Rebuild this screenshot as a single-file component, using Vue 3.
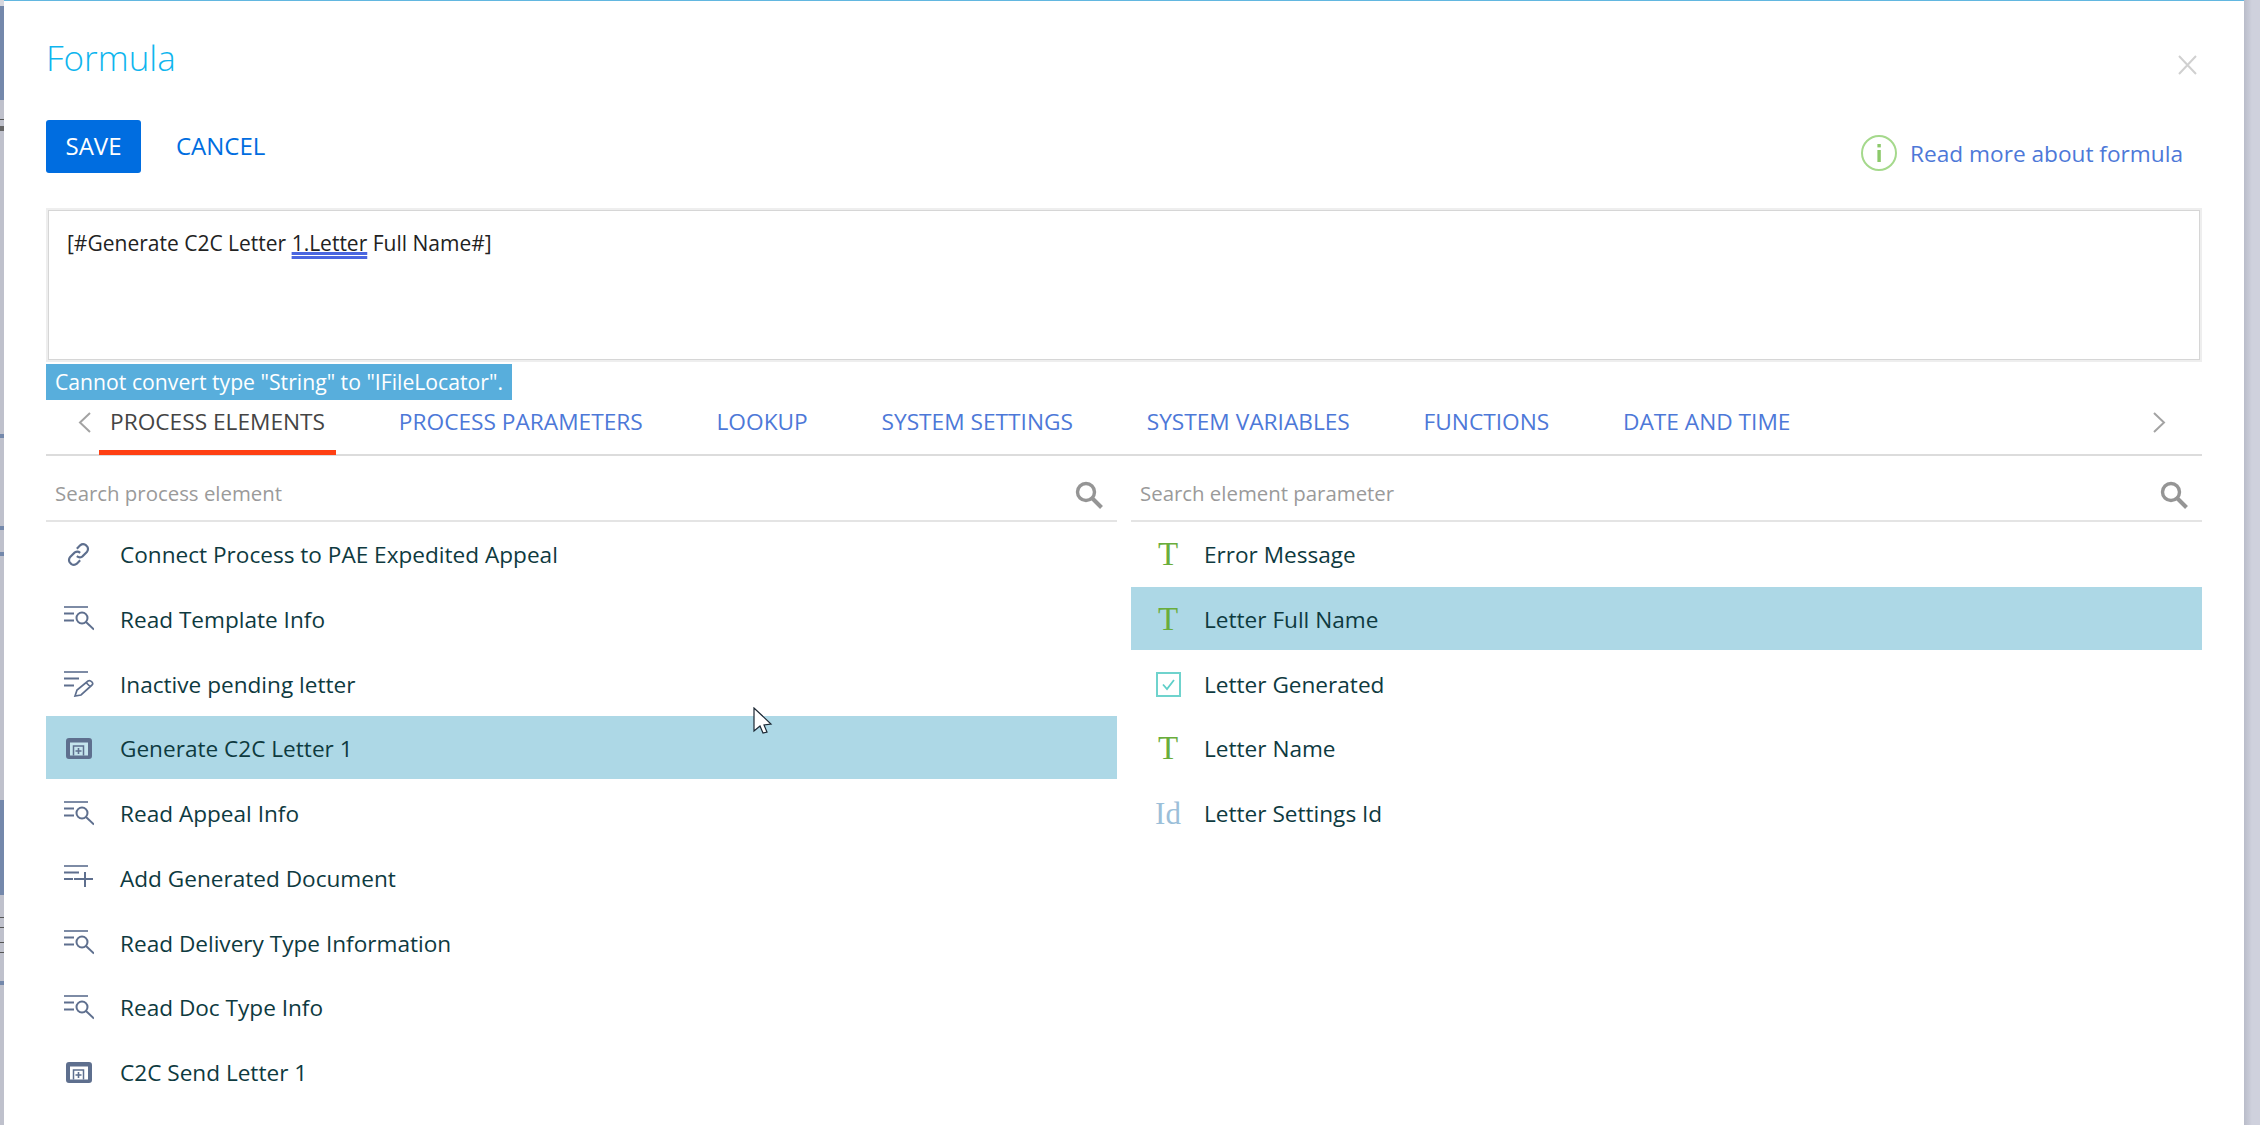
<script setup>
const tabs = ["PROCESS PARAMETERS", "LOOKUP", "SYSTEM SETTINGS", "SYSTEM VARIABLES", "FUNCTIONS", "DATE AND TIME"];

const elements = [
  { name: "Connect Process to PAE Expedited Appeal", icon: "link" },
  { name: "Read Template Info", icon: "read" },
  { name: "Inactive pending letter", icon: "edit" },
  { name: "Generate C2C Letter 1", icon: "sub", selected: true },
  { name: "Read Appeal Info", icon: "read" },
  { name: "Add Generated Document", icon: "add" },
  { name: "Read Delivery Type Information", icon: "read" },
  { name: "Read Doc Type Info", icon: "read" },
  { name: "C2C Send Letter 1", icon: "sub" },
];

const params = [
  { name: "Error Message", type: "text" },
  { name: "Letter Full Name", type: "text", selected: true },
  { name: "Letter Generated", type: "bool" },
  { name: "Letter Name", type: "text" },
  { name: "Letter Settings Id", type: "id" },
];
</script>

<template>
  <div class="page">
    <div class="strip-left"></div>
    <div class="dialog">
      <div class="title-row">
        <h1 class="title">Formula</h1>
        <svg class="close" width="19" height="20" viewBox="0 0 19 20">
          <path d="M1 1 L18 19 M18 1 L1 19" stroke="#d0d0d0" stroke-width="2" fill="none" />
        </svg>
      </div>

      <div class="actions">
        <button class="save">SAVE</button>
        <button class="cancel">CANCEL</button>
        <a class="help">
          <svg width="36" height="36" viewBox="0 0 36 36">
            <circle cx="18" cy="18" r="17" stroke="#a5d98c" stroke-width="2" fill="none" />
            <rect x="16.4" y="9" width="3.4" height="3.4" fill="#8cc96a" />
            <rect x="16.4" y="15" width="3.4" height="12" fill="#8cc96a" />
          </svg>
          <span>Read more about formula</span>
        </a>
      </div>

      <div class="editor">
        <div class="editor-inner">[#Generate C2C Letter <span class="squiggle">1.Letter</span> Full Name#]</div>
      </div>
      <div class="error-row"><span class="error">Cannot convert type "String" to "IFileLocator".</span></div>

      <div class="tabs">
        <svg class="arrow-left" width="13" height="21" viewBox="0 0 13 21">
          <path d="M12 1 L2 10.5 L12 20" stroke="#a3a3a3" stroke-width="2" fill="none" />
        </svg>
        <div class="tab active">PROCESS ELEMENTS</div>
        <div v-for="t in tabs" :key="t" class="tab">{{ t }}</div>
        <svg class="arrow-right" width="13" height="21" viewBox="0 0 13 21">
          <path d="M1 1 L11 10.5 L1 20" stroke="#a3a3a3" stroke-width="2" fill="none" />
        </svg>
      </div>

      <div class="columns">
        <div class="column">
          <div class="search">
            <span>Search process element</span>
            <svg width="28" height="28" viewBox="0 0 28 28">
              <circle cx="11" cy="11" r="8.5" stroke="#959595" stroke-width="3.4" fill="none" />
              <path d="M17 17 L26.5 26.5" stroke="#959595" stroke-width="4" />
            </svg>
          </div>
          <div v-for="el in elements" :key="el.name" class="row" :class="{ selected: el.selected }">
            <div class="row-icon">
              <svg v-if="el.icon === 'link'" class="link-icon" width="25" height="25" viewBox="0 0 30 30" fill="none" stroke="#5e6f8e" stroke-width="2.6">
                <path d="M13 8 L17 4 Q20 1.5 23.5 3.5 L25.5 5.5 Q27.5 9 25 12 L19.5 17.5 Q16 19.5 13 17" />
                <path d="M17 13 Q14 10.5 10.5 12.5 L5 18 Q2.5 21 4.5 24.5 L6.5 26.5 Q10 28.5 13 26 L17 22" />
              </svg>
              <svg v-else-if="el.icon === 'sub'" class="sub-icon" width="26" height="21" viewBox="0 0 26 21">
                <rect x="3" y="4" width="20" height="14" fill="#fff" opacity=".3" />
                <path fill="#5e6f8e" fill-rule="evenodd" d="M3 0 H23 Q26 0 26 3 V18 Q26 21 23 21 H3 Q0 21 0 18 V3 Q0 0 3 0 Z M4 4.5 V17.5 H22 V4.5 Z" />
                <path d="M7.5 17.5 V8 H17.5 V17.5" fill="none" stroke="#5e6f8e" stroke-width="1.5" />
                <path d="M12.5 10 V16 M9.5 13 H15.5" stroke="#5e6f8e" stroke-width="1.6" />
              </svg>
              <svg v-else width="30" height="26" viewBox="0 0 30 26" fill="none" stroke="#5e6f8e" stroke-width="2">
                <path d="M0 1 H24" stroke="#7d8ba5" />
                <template v-if="el.icon === 'read'">
                  <path d="M0 7.5 H10 M0 14.5 H10" />
                  <circle cx="18" cy="12" r="5.5" />
                  <path d="M22 16 L30 23.5" />
                </template>
                <template v-else-if="el.icon === 'add'">
                  <path d="M0 7.5 H15 M0 14 H9" />
                  <path d="M10 14 H29 M21 7 V22" />
                </template>
                <template v-else>
                  <path d="M0 7.5 H15 M0 14.5 H10" />
                  <path d="M11 25 L13 19 L24 10 Q26 9 28 11 Q29.5 13 28 14 L17 24 Z M22 11.5 L26 15.5" stroke-width="1.7" />
                </template>
              </svg>
            </div>
            <span class="row-name">{{ el.name }}</span>
          </div>
        </div>

        <div class="column">
          <div class="search">
            <span>Search element parameter</span>
            <svg width="28" height="28" viewBox="0 0 28 28">
              <circle cx="11" cy="11" r="8.5" stroke="#959595" stroke-width="3.4" fill="none" />
              <path d="M17 17 L26.5 26.5" stroke="#959595" stroke-width="4" />
            </svg>
          </div>
          <div v-for="p in params" :key="p.name" class="row" :class="{ selected: p.selected }">
            <div class="type-icon">
              <span v-if="p.type === 'text'" class="type-t">T</span>
              <span v-else-if="p.type === 'id'" class="type-id">Id</span>
              <svg v-else width="25" height="25" viewBox="0 0 25 25" fill="none">
                <rect x="1" y="1" width="23" height="23" stroke="#6fd3cd" stroke-width="2" />
                <path d="M7 12.5 L11 17 L18 8" stroke="#5fcfc9" stroke-width="1.8" />
              </svg>
            </div>
            <span class="row-name">{{ p.name }}</span>
          </div>
        </div>
      </div>
    </div>
    <div class="strip-right"></div>

    <svg class="cursor" width="20" height="30" viewBox="0 0 20 30">
      <path d="M1 1 V24 L7 19 L10 26 L14 25 L11 18 L18 17 Z" fill="#fff" stroke="#1b2733" stroke-width="1.2" />
    </svg>
  </div>
</template>

<style scoped>
.page {
  width: 2260px;
  height: 1125px;
  display: flex;
  overflow: hidden;
  font-family: "Open Sans", sans-serif;
  position: relative;
}

.strip-left {
  width: 4px;
  background: linear-gradient(
    to bottom,
    #d6d7de 0 6px,
    #7488ab 6px 100px,
    #bfc1cc 100px 119px,
    #555 119px 120px,
    #bfc1cc 120px 126px,
    #666 126px 131px,
    #bfc1cc 131px 434px,
    #7488ab 434px 438px,
    #bfc1cc 438px 526px,
    #7488ab 526px 530px,
    #bfc1cc 530px 552px,
    #7488ab 552px 556px,
    #bfc1cc 556px 800px,
    #7488ab 800px 895px,
    #bfc1cc 895px 917px,
    #555 917px 918px,
    #bfc1cc 918px 927px,
    #555 927px 928px,
    #bfc1cc 928px 942px,
    #555 942px 943px,
    #bfc1cc 943px 952px,
    #555 952px 953px,
    #bfc1cc 953px 981px,
    #7488ab 981px 985px,
    #bfc1cc 985px
  );
}

.strip-right {
  width: 16px;
  background: linear-gradient(to right, #b9bcc9, #cfd1dd 8px);
}

.dialog {
  width: 2240px;
  height: 1125px;
  background: #fff;
  border-top: 1px solid #62b7e0;
  padding: 0 42px;
  box-sizing: border-box;
}

.title-row {
  display: flex;
  justify-content: space-between;
  height: 119px;
}

.title {
  margin: 34px 0 0 0;
  font-size: 35px;
  line-height: 45px;
  font-weight: 300;
  color: #0fb5ee;
}

.close {
  margin: 54px 5px 0 0;
}

.actions {
  display: flex;
  align-items: flex-start;
  height: 88px;
}

.save {
  width: 95px;
  height: 53px;
  background: #006de0;
  color: #fff;
  border: none;
  border-radius: 3px;
  font: 24px "Open Sans", sans-serif;
  padding: 0 0 2px;
}

.cancel {
  margin-left: 35px;
  height: 53px;
  background: none;
  border: none;
  padding: 0 0 2px;
  color: #006de0;
  font: 24px "Open Sans", sans-serif;
}

.help {
  margin: 15px 19px 0 auto;
  display: flex;
  align-items: center;
  gap: 13px;
  color: #4d78d8;
  font-size: 22.65px;
}

.editor {
  height: 154px;
  border: 2px solid #eeeeee;
  box-sizing: border-box;
}

.editor-inner {
  height: 150px;
  box-sizing: border-box;
  border: 1px solid #d6d6d6;
  padding: 20px 18px;
  font-size: 21px;
  line-height: 25px;
  color: #222;
}

.squiggle {
  text-decoration: underline double #4a66e0 3px;
  text-underline-offset: 1px;
}

.error-row {
  display: flex;
  margin-top: 2px;
}

.error {
  background: #58aedc;
  color: #fff;
  font-size: 21.2px;
  line-height: 35px;
  height: 36px;
  padding: 0 9px;
  white-space: nowrap;
}

.tabs {
  display: flex;
  align-items: flex-start;
  position: relative;
  height: 56px;
  box-sizing: border-box;
  border-bottom: 2px solid #dcdcdc;
  padding-left: 53px;
}

.arrow-left {
  position: absolute;
  left: 32px;
  top: 12px;
}

.arrow-right {
  position: absolute;
  right: 36px;
  top: 12px;
}

.tab {
  font-size: 22.7px;
  line-height: 44px;
  height: 55px;
  box-sizing: border-box;
  color: #4d78d8;
  padding: 0 11px;
  margin-right: 51.8px;
  white-space: nowrap;
}

.tab.active {
  color: #444;
  border-bottom: 5px solid #ff4013;
}

.columns {
  display: grid;
  grid-template-columns: 1071px 1071px;
  gap: 14px;
}

.search {
  height: 66px;
  box-sizing: border-box;
  border-bottom: 2px solid #e4e4e4;
  display: flex;
  align-items: center;
  justify-content: space-between;
  padding: 10px 14px 0 9px;
  font-size: 20.4px;
  color: #9a9a9a;
}

.search svg {
  margin-top: 4px;
}

.row {
  height: 63px;
  padding-top: 2px;
  box-sizing: border-box;
  margin-bottom: 1.75px;
  display: flex;
  align-items: center;
  font-size: 22.6px;
  color: #0e3a3f;
  white-space: nowrap;
}

.row.selected {
  background: #add8e6;
}

.row-icon {
  width: 30px;
  margin-left: 18px;
  margin-right: 26px;
  display: flex;
  justify-content: flex-start;
}

.link-icon,
.sub-icon {
  margin-left: 2px;
}

.type-icon {
  width: 30px;
  margin-left: 22px;
  margin-right: 21px;
  display: flex;
  justify-content: center;
  font-family: "Liberation Serif", serif;
  line-height: 1;
}

.type-t {
  font-size: 33px;
  color: #6aad3c;
}

.type-id {
  font-size: 31px;
  color: #9cbfd9;
}

.cursor {
  position: absolute;
  left: 753px;
  top: 707px;
}
</style>
